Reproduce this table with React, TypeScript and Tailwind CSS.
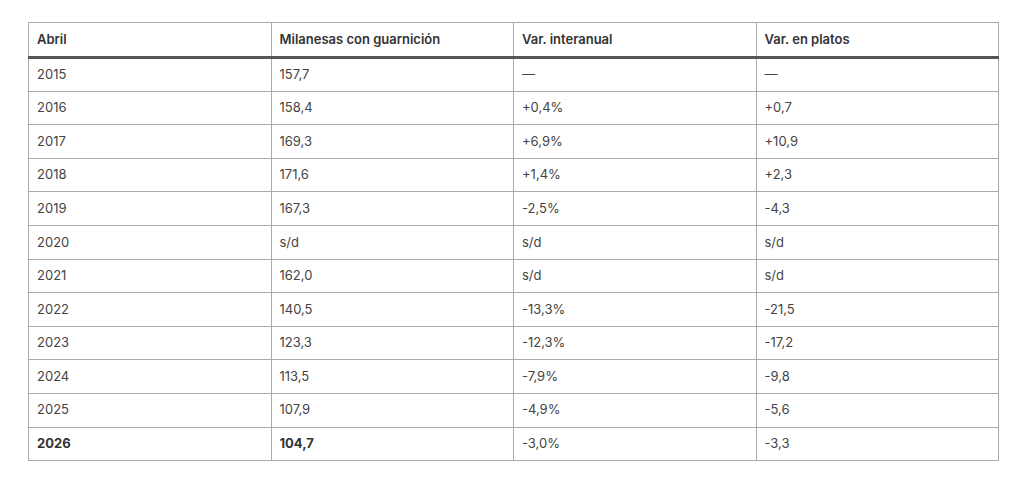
import React from "react";

const rows: { y: string; m: string; v: string; p: string; bold?: boolean }[] = [
  { y: "2015", m: "157,7", v: "—", p: "—" },
  { y: "2016", m: "158,4", v: "+0,4%", p: "+0,7" },
  { y: "2017", m: "169,3", v: "+6,9%", p: "+10,9" },
  { y: "2018", m: "171,6", v: "+1,4%", p: "+2,3" },
  { y: "2019", m: "167,3", v: "-2,5%", p: "-4,3" },
  { y: "2020", m: "s/d", v: "s/d", p: "s/d" },
  { y: "2021", m: "162,0", v: "s/d", p: "s/d" },
  { y: "2022", m: "140,5", v: "-13,3%", p: "-21,5" },
  { y: "2023", m: "123,3", v: "-12,3%", p: "-17,2" },
  { y: "2024", m: "113,5", v: "-7,9%", p: "-9,8" },
  { y: "2025", m: "107,9", v: "-4,9%", p: "-5,6" },
  { y: "2026", m: "104,7", v: "-3,0%", p: "-3,3", bold: true },
];

export default function App() {
  return (
    <div
      className="w-[1024px] h-[481px] bg-white pt-[22px] pl-[28px]"
      style={{ fontFamily: "Inter, 'Noto Sans', sans-serif" }}
    >
      <table className="w-[971px] border-collapse table-fixed text-[13px] text-[#444]">
        <thead>
          <tr className="h-[35px]">
            {["Abril", "Milanesas con guarnición", "Var. interanual", "Var. en platos"].map((h) => (
              <th
                key={h}
                className="border border-[#aaa] border-b-[3px] border-b-[#555] px-2 text-left font-semibold text-[#333]"
              >
                {h}
              </th>
            ))}
          </tr>
        </thead>
        <tbody>
          {rows.map((r) => (
            <tr key={r.y} className="h-[33.6px]">
              <td className={`border border-[#aaa] px-2 ${r.bold ? "font-bold text-[#333]" : ""}`}>{r.y}</td>
              <td className={`border border-[#aaa] px-2 ${r.bold ? "font-bold text-[#333]" : ""}`}>{r.m}</td>
              <td className="border border-[#aaa] px-2">{r.v}</td>
              <td className="border border-[#aaa] px-2">{r.p}</td>
            </tr>
          ))}
        </tbody>
      </table>
    </div>
  );
}
